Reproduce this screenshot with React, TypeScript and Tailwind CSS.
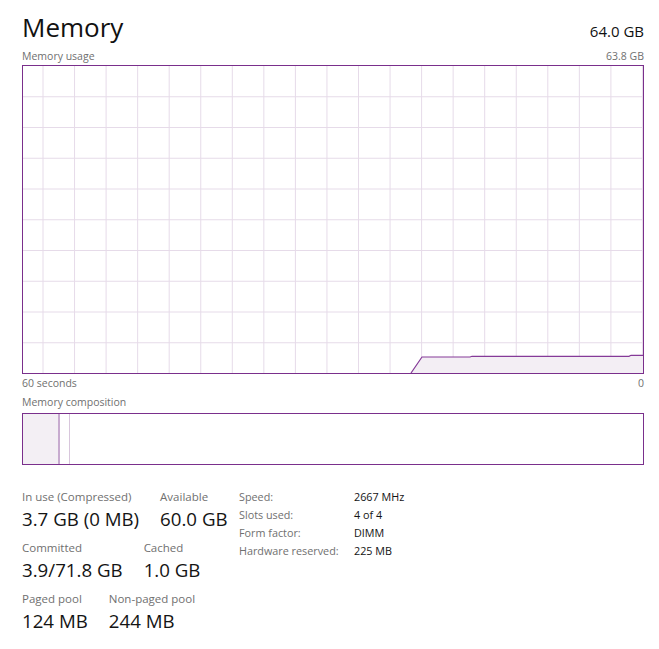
import React from 'react'

const FONT = { fontFamily: '"Open Sans", "Noto Sans", sans-serif' }

const GRAPH_W = 620
const GRAPH_H = 307

function UsageGraph() {
  const cols: number[] = []
  for (let x = 20; x < GRAPH_W; x += 31.55) cols.push(x)
  const rows: number[] = []
  for (let k = 1; k < 10; k++) rows.push(k * 30.75)

  // points relative to inner area
  const pts: [number, number][] = [
    [388, GRAPH_H],
    [399, 291],
    [447, 291],
    [449, 290.3],
    [606, 290.3],
    [608, 289.3],
    [GRAPH_W, 289.3],
  ]
  const line = pts.map(([x, y]) => `${x},${y}`).join(' ')
  const area = `${line} ${GRAPH_W},${GRAPH_H}`

  return (
    <div className="border border-[#7a2f8c] w-[622px] h-[309px]">
      <svg width={GRAPH_W} height={GRAPH_H} className="block">
        {cols.map((x, i) => (
          <line key={'c' + i} x1={x} x2={x} y1={0} y2={GRAPH_H} stroke="#e6dbe9" strokeWidth={1} />
        ))}
        {rows.map((y, i) => (
          <line key={'r' + i} x1={0} x2={GRAPH_W} y1={y} y2={y} stroke="#e6dbe9" strokeWidth={1} />
        ))}
        <polygon points={area} fill="#f3eef4" />
        <polyline points={line} fill="none" stroke="#853a98" strokeWidth={1.2} />
      </svg>
    </div>
  )
}

function Stat({ label, value }: { label: string; value: string }) {
  return (
    <div className="flex flex-col">
      <span className="text-[11.5px] leading-[16px] text-[#707070] whitespace-nowrap">{label}</span>
      <span className="text-[18.7px] leading-[28px] text-[#141414] whitespace-nowrap">{value}</span>
    </div>
  )
}

const SPECS = [
  ['Speed:', '2667 MHz'],
  ['Slots used:', '4 of 4'],
  ['Form factor:', 'DIMM'],
  ['Hardware reserved:', '225 MB'],
]

export default function App() {
  return (
    <div className="w-[659px] h-[649px] bg-white pl-[22px] pr-[15px] overflow-hidden" style={FONT}>
      {/* header */}
      <div className="flex justify-between items-baseline pt-[10px] w-[622px]">
        <h1 className="text-[26px] leading-[34px] text-[#111]">Memory</h1>
        <span className="text-[15px] leading-[20px] text-[#111]">64.0 GB</span>
      </div>

      <div className="flex justify-between mt-[5px] w-[622px] text-[10.5px] leading-[14px] text-[#707070]">
        <span>Memory usage</span>
        <span>63.8 GB</span>
      </div>

      <div className="mt-[2px]">
        <UsageGraph />
      </div>

      <div className="flex justify-between mt-[2px] w-[622px] text-[10.5px] leading-[14px] text-[#707070]">
        <span>60 seconds</span>
        <span>0</span>
      </div>

      <div className="mt-[5px] text-[10.5px] leading-[14px] text-[#707070]">Memory composition</div>

      {/* composition bar */}
      <div className="mt-[4px] w-[622px] h-[52px] border border-[#7a2f8c] flex">
        <div className="w-[35px] bg-[#f3eff4]" />
        <div className="w-[2px] bg-[#c7abcf]" />
        <div className="w-[9px]" />
        <div className="w-[1px] bg-[#d8c6dc]" />
        <div className="flex-1" />
      </div>

      {/* stats */}
      <div className="flex mt-[24px]">
        <div className="w-[217px] flex flex-col gap-[7px]">
          <div className="flex gap-[21px]">
            <Stat label="In use (Compressed)" value="3.7 GB (0 MB)" />
            <Stat label="Available" value="60.0 GB" />
          </div>
          <div className="flex gap-[21px]">
            <Stat label="Committed" value="3.9/71.8 GB" />
            <Stat label="Cached" value="1.0 GB" />
          </div>
          <div className="flex gap-[21px]">
            <Stat label="Paged pool" value="124 MB" />
            <Stat label="Non-paged pool" value="244 MB" />
          </div>
        </div>
        <div className="flex flex-col -mt-[1px]">
          {SPECS.map(([k, v]) => (
            <div key={k} className="flex text-[10.8px] leading-[18px]">
              <span className="w-[115px] text-[#707070]">{k}</span>
              <span className="text-[#141414]">{v}</span>
            </div>
          ))}
        </div>
      </div>
    </div>
  )
}
